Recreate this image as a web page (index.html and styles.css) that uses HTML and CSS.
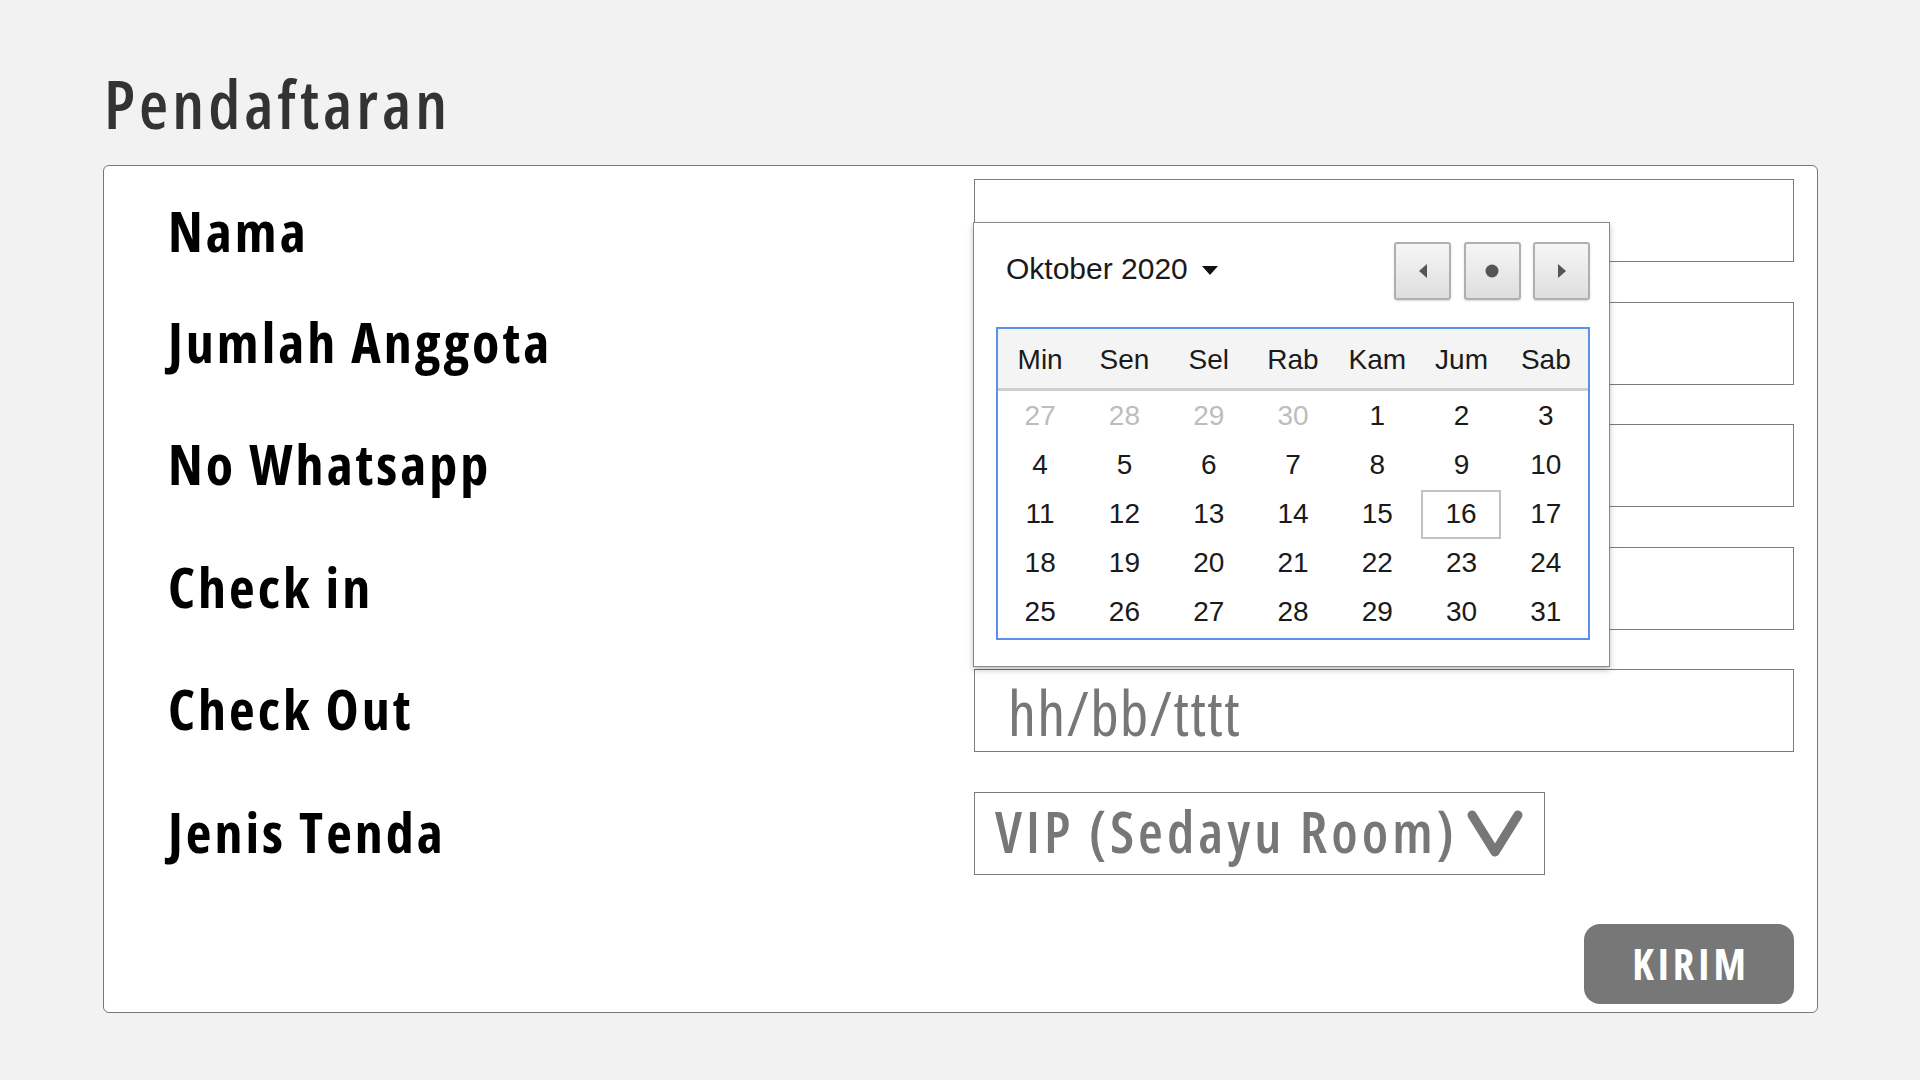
FILE: index.html
```html
<!DOCTYPE html>
<html lang="id">
<head>
<meta charset="utf-8">
<title>Pendaftaran</title>
<link rel="stylesheet" href="styles.css">
</head>
<body>
<main class="page">
  <h1 class="title">Pendaftaran</h1>
  <section class="card">
    <div class="form">
      <div class="label label-first">Nama</div>
      <div class="field"></div>
      <div class="label">Jumlah Anggota</div>
      <div class="field"></div>
      <div class="label">No Whatsapp</div>
      <div class="field"></div>
      <div class="label">Check in</div>
      <div class="field"></div>
      <div class="label">Check Out</div>
      <div class="field"><span class="placeholder">hh/bb/tttt</span></div>
      <div class="label">Jenis Tenda</div>
      <div class="field select">
        <span class="select-text">VIP (Sedayu Room)</span>
        <svg class="chevron" width="56" height="48" viewBox="0 0 56 48"><polyline points="5,5 28,42 51,5" fill="none" stroke="#777" stroke-width="9" stroke-linecap="round" stroke-linejoin="round"/></svg>
      </div>
    </div>
    <div class="actions"><button class="submit" type="button">KIRIM</button></div>

    <div class="picker">
      <div class="picker-head">
        <div class="month">Oktober 2020 <svg class="caret" width="16" height="9" viewBox="0 0 16 9"><polygon points="0,0 16,0 8,9" fill="#111"/></svg></div>
        <div class="nav">
          <span class="nav-btn"><svg width="12" height="14" viewBox="0 0 12 14"><polygon points="10,0 10,14 2,7" fill="#555"/></svg></span>
          <span class="nav-btn"><svg width="14" height="14" viewBox="0 0 14 14"><circle cx="7" cy="7" r="6.5" fill="#555"/></svg></span>
          <span class="nav-btn"><svg width="12" height="14" viewBox="0 0 12 14"><polygon points="2,0 2,14 10,7" fill="#555"/></svg></span>
        </div>
      </div>
      <div class="cal">
        <div class="cal-head">
          <span>Min</span><span>Sen</span><span>Sel</span><span>Rab</span><span>Kam</span><span>Jum</span><span>Sab</span>
        </div>
        <div class="cal-body">
          <span class="muted">27</span><span class="muted">28</span><span class="muted">29</span><span class="muted">30</span><span>1</span><span>2</span><span>3</span>
          <span>4</span><span>5</span><span>6</span><span>7</span><span>8</span><span>9</span><span>10</span>
          <span>11</span><span>12</span><span>13</span><span>14</span><span>15</span><span class="today">16</span><span>17</span>
          <span>18</span><span>19</span><span>20</span><span>21</span><span>22</span><span>23</span><span>24</span>
          <span>25</span><span>26</span><span>27</span><span>28</span><span>29</span><span>30</span><span>31</span>
        </div>
      </div>
    </div>
  </section>
</main>
</body>
</html>
```

FILE: styles.css
```css
* { box-sizing: border-box; }

html, body {
  margin: 0;
  padding: 0;
  background: #f2f2f2;
}

body {
  font-family: "Open Sans", "Noto Sans", sans-serif;
  font-stretch: 75%;
  width: 1920px;
  height: 1080px;
  overflow: hidden;
}

.page {
  padding: 70px 0 0 103px;
  width: 1818px;
}

.title {
  margin: 0 0 28px 1px;
  font-size: 67px;
  line-height: 67px;
  font-weight: 600;
  letter-spacing: 4px;
  color: #333;
}

.card {
  position: relative;
  width: 1715px;
  height: 848px;
  background: #fff;
  border: 1px solid #777;
  border-radius: 6px;
  padding: 13px 23px 9px 64px;
}

.form {
  display: grid;
  grid-template-columns: 806px 820px;
  grid-auto-rows: 83px;
  row-gap: 39.5px;
  align-items: center;
}

.label {
  font-size: 56px;
  line-height: 56px;
  font-weight: 700;
  letter-spacing: 3px;
  color: #000;
  white-space: nowrap;
  margin-top: -5px;
}

.label-first {
  margin-top: 0;
  padding-top: 19px;
}

.field {
  height: 83px;
  border: 1px solid #7a7a7a;
  background: #fff;
  display: flex;
  align-items: center;
}

.placeholder {
  padding-left: 33px;
  font-size: 62px;
  letter-spacing: 1.2px;
  color: #777;
  line-height: 1;
  margin-top: 2px;
  white-space: nowrap;
}

.select {
  width: 571px;
  justify-content: space-between;
  padding: 0 21px 0 20px;
}

.select-text {
  font-size: 57px;
  font-weight: 600;
  letter-spacing: 4px;
  line-height: 1;
  color: #777;
  margin-top: -4px;
  white-space: nowrap;
}

.chevron {
  display: block;
  flex: none;
  margin-top: 2px;
}

.actions {
  display: flex;
  justify-content: flex-end;
  margin-top: 49px;
}

.submit {
  width: 210px;
  height: 80px;
  border: 0;
  border-radius: 16px;
  background: #777;
  color: #fff;
  font-family: "Open Sans", "Noto Sans", sans-serif;
  font-stretch: 75%;
  font-size: 42px;
  font-weight: 700;
  letter-spacing: 4px;
  padding: 0 0 0 4px;
}

/* Date picker popup */
.picker {
  position: absolute;
  left: 869px;
  top: 56px;
  width: 637px;
  height: 445px;
  background: #fff;
  border: 1px solid #8a8a8a;
  box-shadow: 0 3px 6px rgba(0, 0, 0, 0.25);
  padding: 19px 19px 0 22px;
  font-family: "Liberation Sans", Arial, sans-serif;
  font-stretch: normal;
  color: #1a1a1a;
}

.picker-head {
  display: flex;
  justify-content: space-between;
  align-items: center;
  height: 58px;
}

.month {
  display: flex;
  align-items: center;
  gap: 14px;
  padding-left: 10px;
  font-size: 30px;
  margin-top: -4px;
}

.caret { display: block; margin-top: 2px; }

.nav {
  display: flex;
  gap: 12.5px;
}

.nav-btn {
  width: 57px;
  height: 58px;
  display: flex;
  align-items: center;
  justify-content: center;
  border: 2px solid #b0b0b0;
  border-radius: 3px;
  background: linear-gradient(#f6f6f6, #dedede);
  box-shadow: 0 1px 2px rgba(0, 0, 0, 0.15);
}

.nav-btn svg { display: block; }

.cal {
  margin-top: 27px;
  width: 594px;
  height: 313px;
  border: 2px solid #5b8ff0;
}

.cal-head {
  display: grid;
  grid-template-columns: repeat(7, 1fr);
  height: 62px;
  background: #f4f4f4;
  border-bottom: 3px solid #cfcfcf;
  align-items: center;
  font-size: 28px;
  color: #1a1a1a;
}

.cal-head span,
.cal-body span {
  text-align: center;
}

.cal-head span { padding-top: 2px; }

.cal-body {
  display: grid;
  grid-template-columns: repeat(7, 1fr);
  grid-auto-rows: 49.2px;
  font-size: 28px;
}

.cal-body span {
  display: flex;
  align-items: center;
  justify-content: center;
  padding-top: 0;
}

.cal-body .muted { color: #bdbdbd; }

.cal-body .today {
  border: 2px solid #c2c2c2;
  margin: 1px 3px 0 2px;
}
```
